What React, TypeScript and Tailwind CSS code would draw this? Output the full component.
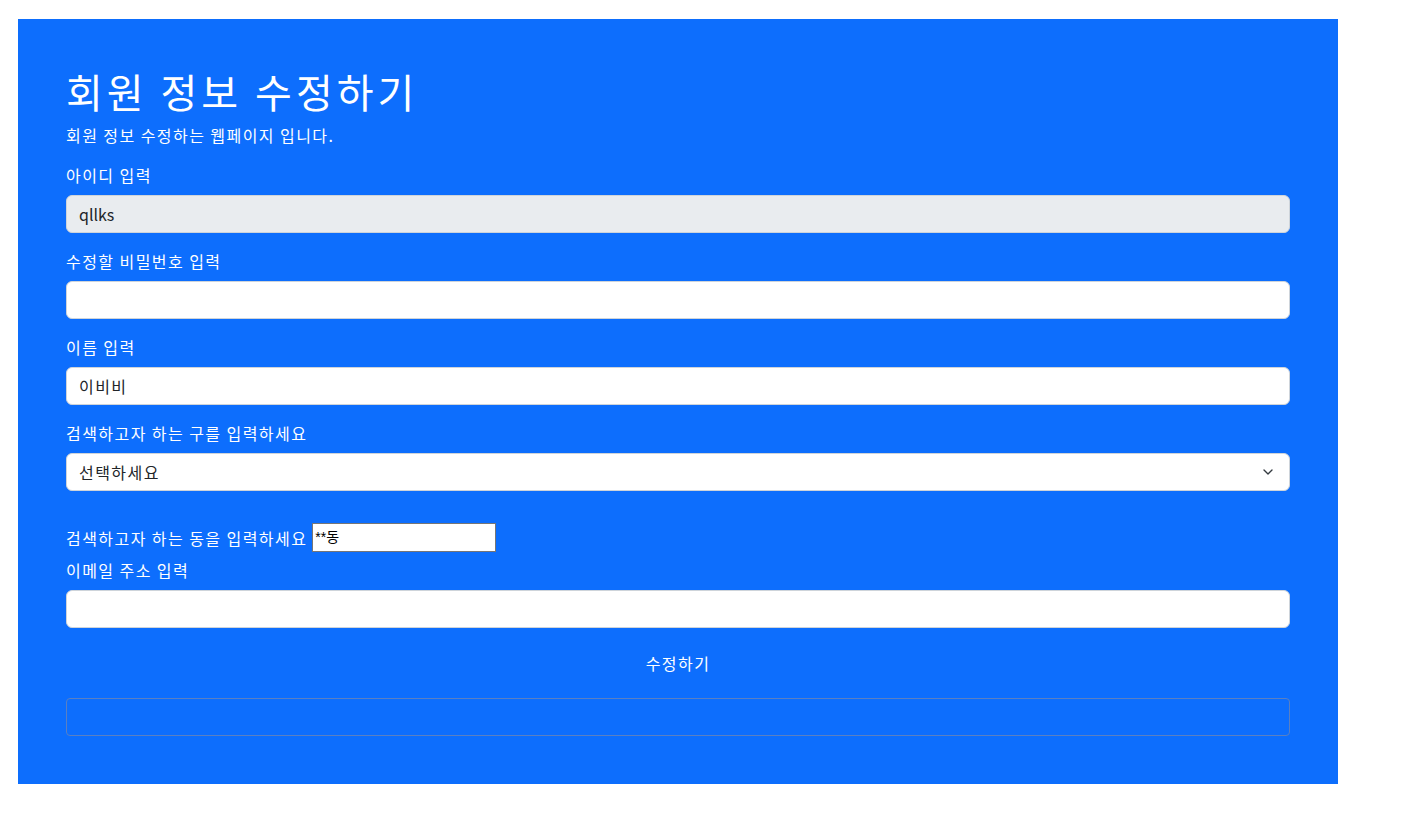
import { ChevronDown } from 'lucide-react';

const font = "font-['Segoe_UI','Noto_Sans_CJK_KR',sans-serif]";

function Field({ label, value, readOnly }: { label: string; value?: string; readOnly?: boolean }) {
  return (
    <div className="mb-4">
      <label className="block mb-2 leading-6 text-base">{label}</label>
      <div
        className={`h-[38px] flex items-center px-3 rounded-[6px] border border-[#ced4da] text-[#212529] text-base ${
          readOnly ? 'bg-[#e9ecef] tracking-normal' : 'bg-white'
        }`}
      >
        {value}
      </div>
    </div>
  );
}

export default function App() {
  return (
    <div className={`min-h-screen bg-white pt-[19px] pl-[18px] tracking-[0.09em] ${font}`}>
      <div className="w-[1320px] bg-[#0d6efd] text-white p-12">
        <h1 className="text-[40px] leading-[48px] mb-2 tracking-[0.1em]">회원 정보 수정하기</h1>
        <p className="text-base leading-6 mb-4">회원 정보 수정하는 웹페이지 입니다.</p>

        <Field label="아이디 입력" value="qllks" readOnly />
        <Field label="수정할 비밀번호 입력" />
        <Field label="이름 입력" value="이비비" />

        <div className="mb-4">
          <label className="block mb-2 leading-6 text-base">검색하고자 하는 구를 입력하세요</label>
          <div className="h-[38px] flex items-center justify-between pl-3 pr-[13px] rounded-[6px] border border-[#ced4da] bg-white text-[#212529] text-base">
            <span>선택하세요</span>
            <ChevronDown size={16} strokeWidth={2} className="text-[#343a40]" />
          </div>
        </div>

        <div className="mt-8 h-[29px] mb-[6px] flex items-center text-base">
          <span>검색하고자 하는 동을 입력하세요</span>
          <div className="ml-[5px] w-[184px] h-[29px] bg-white border border-[#767676] text-black text-[14px] tracking-normal flex items-center pl-[2px] font-['Liberation_Sans','Noto_Sans_CJK_KR',sans-serif]">
            **동
          </div>
        </div>

        <Field label="이메일 주소 입력" />

        <button className="w-full h-[38px] text-base text-white text-center">수정하기</button>

        <div className="mt-4 h-[38px] rounded-[4px] border border-[#5a80c2]" />
      </div>
    </div>
  );
}
